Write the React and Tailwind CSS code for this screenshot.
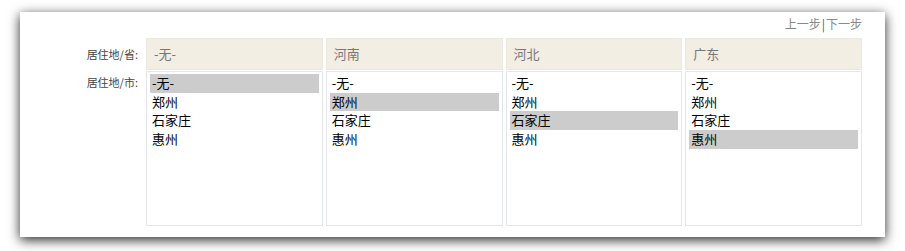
import React from 'react'

const cities = ['-无-', '郑州', '石家庄', '惠州']

const provinces = [
  { name: '-无-', selected: 0 },
  { name: '河南', selected: 1 },
  { name: '河北', selected: 2 },
  { name: '广东', selected: 3 },
]

const App = () => {
  return (
    <div className="w-[905px] h-[251px] bg-white pt-[12px] pl-[20px]" style={{ fontFamily: '"Noto Sans CJK SC", "Noto Sans", sans-serif' }}>
      <div className="w-[865px] h-[225px] bg-white shadow-[0_3px_11px_rgba(0,0,0,0.85)] pr-[23px]">
        <div className="flex justify-end h-[26px] pt-[4px] text-[12px] leading-[16px] text-[#888]">
          <span>上一步</span>
          <span className="px-[1px] text-[#555]">|</span>
          <span>下一步</span>
        </div>
        <div className="flex">
          <div className="w-[126px] shrink-0 flex flex-col items-end pr-[8px] text-[11px] text-[#444]">
            <div className="h-[32px] leading-[32px]">居住地/省:</div>
            <div className="leading-[24px]">居住地/市:</div>
          </div>
          <div className="grid grid-cols-4 gap-[3px] w-[716px]">
            {provinces.map((p) => (
              <div key={p.name} className="flex flex-col">
                <div className="h-[32px] bg-[#f2eee4] border border-[#ebe8e0] px-[7px] text-[13px] leading-[30px] text-[#777]">
                  {p.name}
                </div>
                <div className="h-[155px] mt-[1px] border border-[#e3e6ec] px-[3px] pt-[2px]">
                  {cities.map((c, i) => (
                    <div key={c} className={`h-[18.67px] px-[2px] text-[13px] leading-[18.67px] text-black ${i === p.selected ? 'bg-[#cccccc]' : ''}`}>
                      {c}
                    </div>
                  ))}
                </div>
              </div>
            ))}
          </div>
        </div>
      </div>
    </div>
  )
}

export default App
